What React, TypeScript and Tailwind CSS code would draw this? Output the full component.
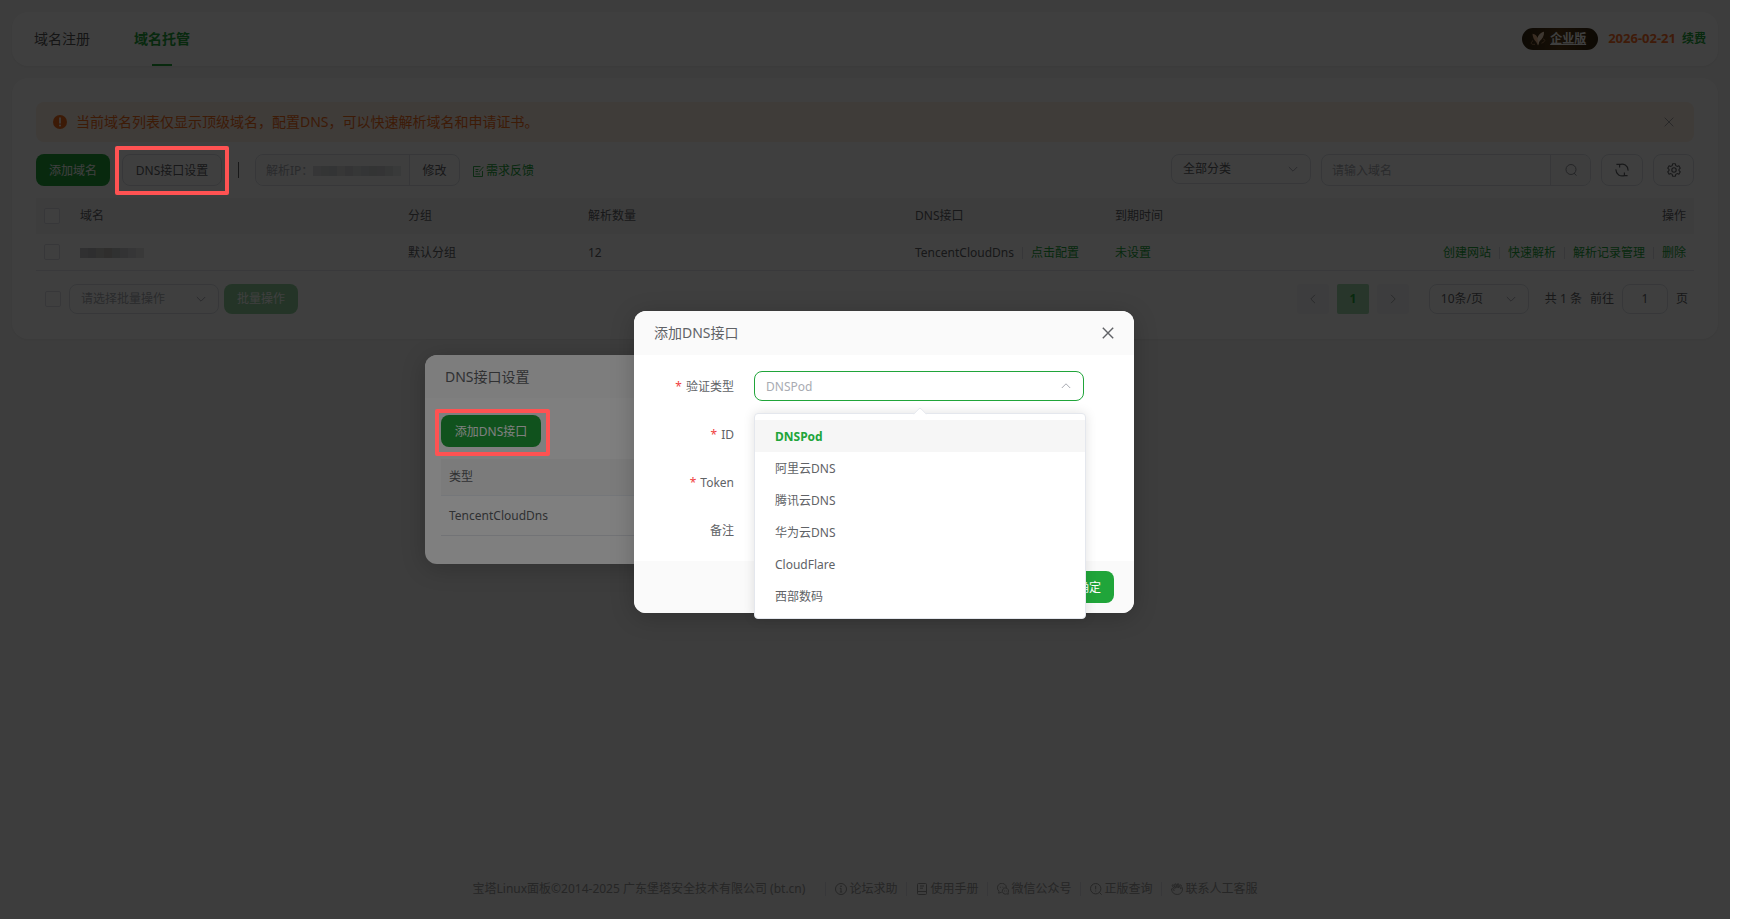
import type { ReactNode } from "react";
import clsx from "clsx";

const footerLinks = [
  { label: "论坛求助", icon: <ForumIcon /> },
  { label: "使用手册", icon: <ManualIcon /> },
  { label: "微信公众号", icon: <WechatIcon /> },
  { label: "正版查询", icon: <GenuineIcon /> },
  { label: "联系人工客服", icon: <ServiceIcon /> },
];

const dnsOptions = ["DNSPod", "阿里云DNS", "腾讯云DNS", "华为云DNS", "CloudFlare", "西部数码"];

const rowActions = ["创建网站", "快速解析", "解析记录管理", "删除"];

export default function App() {
  return (
    <div className="min-h-screen bg-white pr-[10px] font-['Noto_Sans','Noto_Sans_CJK_SC',sans-serif] text-xs text-[#606266]">
      <div className="relative flex min-h-screen flex-col overflow-hidden bg-[#f5f5f5] px-3 pt-3">
        <TopTabs />
        <DomainPanel />
        <Footer />

        <div className="absolute inset-0 z-10 bg-black/50" />
        <DnsListDialog />
        <div className="absolute inset-0 z-30 bg-black/50" />
        <AddDnsDialog />

        {/* guide marks */}
        <div className="absolute top-[146px] left-[115px] z-50 h-[49px] w-[114px] rounded-xs border-4 border-[#ff5252]" />
        <div className="absolute top-[409px] left-1/2 z-50 -ml-[430px] h-[47px] w-[115px] rounded-xs border-4 border-[#ff5252]" />
      </div>
    </div>
  );
}

function TopTabs() {
  return (
    <header className="flex h-[54px] items-center justify-between rounded-2xl bg-white pr-3 shadow-xs">
      <nav className="flex h-full text-sm">
        <a href="#register" className="flex w-[100px] items-center pl-[22px] text-[#555]">域名注册</a>
        <a href="#hosting" className="relative flex w-[100px] items-center justify-center rounded-lg bg-[#fcfcfc] font-bold text-[#20a53a]">
          域名托管
          <span className="absolute bottom-0 left-1/2 h-0.5 w-5 -translate-x-1/2 bg-[#20a53a]" />
        </a>
      </nav>
      <div className="flex items-center font-bold">
        <a href="#edition" className="flex h-[22px] w-[76px] items-center gap-1 rounded-full bg-linear-to-r from-[#332611] via-[#5c3d1a] to-[#332611] pl-2 text-white underline">
          <BirdIcon />
          企业版
        </a>
        <span className="ml-[10px] text-[13px] text-[#fc6d26]">2026-02-21</span>
        <a href="#renew" className="ml-1.5 text-[#20a53a]">续费</a>
      </div>
    </header>
  );
}

function DomainPanel() {
  return (
    <main className="mt-3 rounded-2xl bg-white px-6 pt-6 pb-[25px] shadow-xs">
      <section className="flex h-10 items-center rounded-lg bg-[#fff0e5] px-[17px] text-sm text-[#f56c1a]">
        <svg className="size-[14px]" viewBox="0 0 14 14">
          <circle cx="7" cy="7" r="7" fill="#f06a1a" />
          <path d="M7 3v5" stroke="#fff" strokeWidth="1.6" strokeLinecap="round" />
          <circle cx="7" cy="10.6" r="1" fill="#fff" />
        </svg>
        <p className="ml-[9px]">当前域名列表仅显示顶级域名，配置DNS，可以快速解析域名和申请证书。</p>
        <button className="ml-auto flex size-4 items-center justify-center text-[#909399]" aria-label="关闭提示">
          <CloseIcon className="size-[10px]" />
        </button>
      </section>

      <section className="mt-3 flex h-8 items-center">
        <button className="h-8 w-[74px] rounded-lg bg-[#20a53a] pt-0.5 text-white">添加域名</button>
        <button className="ml-3 h-8 w-[100px] rounded-lg border border-[#dcdfe6] pt-0.5">DNS接口设置</button>
        <span className="ml-4 h-4 w-px bg-[#606266]" />
        <div className="ml-4 flex h-8 w-[205px] rounded-lg border border-[#dcdfe6]">
          <div className="flex flex-1 items-center rounded-l-lg bg-[#f9f9fa] pt-0.5 pl-[10px] text-[#a8abb2]">
            解析IP：
            <Mosaic cells={["bg-[#d8dadc]", "bg-[#d3d4d7]", "bg-[#cfd2d5]", "bg-[#dcdddf]", "bg-[#d0d3d6]", "bg-[#dadcde]", "bg-[#d3d5d8]", "bg-[#ccd0d3]", "bg-[#d0d2d5]", "bg-[#dadcde]", "bg-[#e6e8ea]"]} />
          </div>
          <button className="w-[50px] border-l border-[#dcdfe6] pt-0.5">修改</button>
        </div>
        <a href="#feedback" className="ml-[13px] flex items-center gap-0.5 pt-0.5 text-[#20a53a]">
          <FeedbackIcon />
          需求反馈
        </a>

        <div className="ml-auto flex gap-[10px]">
          <SelectBox label="分类" value="全部分类" className="w-[140px]" />
          <div className="flex h-8 w-[270px] overflow-hidden rounded-lg border border-[#dcdfe6]">
            <input aria-label="搜索域名" placeholder="请输入域名" className="min-w-0 flex-1 px-[10px] pt-0.5 outline-none placeholder:text-[#a8abb2]" />
            <button className="flex w-10 items-center justify-center border-l border-[#dcdfe6] bg-[#f8f8f9] text-[#909399]" aria-label="搜索">
              <svg className="size-3" viewBox="0 0 12 12" fill="none" stroke="currentColor">
                <circle cx="6" cy="5.5" r="5" />
                <path d="M9 9l2.4 2.6" />
              </svg>
            </button>
          </div>
          <button className="flex h-8 w-[42px] items-center justify-center rounded-lg border border-[#dcdfe6]" aria-label="刷新"><RefreshIcon /></button>
          <button className="flex h-8 w-[41px] items-center justify-center rounded-lg border border-[#dcdfe6]" aria-label="设置"><GearIcon /></button>
        </div>
      </section>

      <table className="mt-3 w-full table-fixed text-left">
        <thead>
          <tr className="h-9 bg-[#f7f7f7]">
            <th className="w-9 pl-2"><Checkbox label="全选" /></th>
            <th className="w-[328px] px-2 font-normal">域名</th>
            <th className="w-[180px] px-2 font-normal">分组</th>
            <th className="w-[327px] px-2 font-normal">解析数量</th>
            <th className="w-[200px] px-2 font-normal">DNS接口</th>
            <th className="px-2 font-normal">到期时间</th>
            <th className="w-[20%] px-2 text-right font-normal">操作</th>
          </tr>
        </thead>
        <tbody>
          <tr className="h-9 border-b border-[#e4e7ed]">
            <td className="pl-2"><Checkbox label="选择域名" /></td>
            <td className="px-2 pt-0.5">
              <Mosaic cells={["bg-[#c2c3c5]", "bg-[#b8babd]", "bg-[#c5c5c3]", "bg-[#bcbab5]", "bg-[#c3c4c6]", "bg-[#ccced0]", "bg-[#d8dadc]", "bg-[#e4e5e7]"]} />
            </td>
            <td className="px-2 pt-0.5">默认分组</td>
            <td className="px-2 pt-0.5">12</td>
            <td className="px-2 pt-0.5">
              <div className="flex items-center gap-2 whitespace-nowrap">
                TencentCloudDns
                <Divider />
                <a href="#config" className="text-[#20a53a]">点击配置</a>
              </div>
            </td>
            <td className="px-2 pt-0.5"><a href="#expire" className="text-[#20a53a]">未设置</a></td>
            <td className="px-2 pt-0.5">
              <div className="flex items-center justify-end gap-2 whitespace-nowrap text-[#20a53a]">
                {rowActions.map((action, i) => (
                  <div key={action} className="flex items-center gap-2">
                    {i > 0 && <Divider />}
                    <a href="#action">{action}</a>
                  </div>
                ))}
              </div>
            </td>
          </tr>
        </tbody>
      </table>

      <section className="mt-[13px] flex h-[30px] items-center justify-between pr-1.5 pl-[9px]">
        <div className="flex items-center">
          <Checkbox label="批量选择" />
          <SelectBox label="批量操作" value="请选择批量操作" className="ml-2 w-[150px] text-[#a8abb2]" />
          <button className="ml-[5px] h-[30px] w-[74px] rounded-lg bg-[#90d29d] text-white">批量操作</button>
        </div>
        <div className="flex items-center gap-2">
          <button className="flex h-[30px] w-8 items-center justify-center rounded-xs bg-[#f7f7f8] text-[#a8abb2]" aria-label="上一页"><Chevron className="size-[10px] rotate-90" /></button>
          <button className="h-[30px] w-8 rounded-xs bg-[#a0d8ac] font-bold text-[#20a53a]">1</button>
          <button className="flex h-[30px] w-8 items-center justify-center rounded-xs bg-[#f7f7f8] text-[#a8abb2]" aria-label="下一页"><Chevron className="size-[10px] -rotate-90" /></button>
          <SelectBox label="每页条数" value="10条/页" className="ml-3 w-[100px]" />
          <span className="ml-2">共 1 条</span>
          <label htmlFor="page">前往</label>
          <input id="page" defaultValue="1" className="h-[30px] w-[46px] rounded-lg border border-[#dcdfe6] text-center outline-none" />
          <span>页</span>
        </div>
      </section>
    </main>
  );
}

function DnsListDialog() {
  return (
    <section role="dialog" aria-label="DNS接口设置" className="absolute top-[355px] left-1/2 z-20 -ml-[440px] w-[660px] rounded-xl bg-white shadow-[0_4px_24px_rgba(0,0,0,0.2)]">
      <h2 className="flex h-[43px] items-center rounded-t-xl bg-[#fafafa] pl-5 text-sm">DNS接口设置</h2>
      <div className="px-4 pt-[17px] pb-7">
        <button className="h-8 w-[100px] rounded-lg bg-[#20a53a] pt-0.5 text-white">添加DNS接口</button>
        <table className="mt-3 w-full text-left">
          <thead>
            <tr className="h-9 border-b border-[#ebeef5] bg-[#f7f7f7]">
              <th className="px-2 font-normal">类型</th>
            </tr>
          </thead>
          <tbody>
            <tr className="h-10 border-b border-[#e4e7ed]">
              <td className="px-2 pt-0.5">TencentCloudDns</td>
            </tr>
          </tbody>
        </table>
      </div>
    </section>
  );
}

function AddDnsDialog() {
  return (
    <section role="dialog" aria-label="添加DNS接口" className="absolute top-[311px] left-1/2 z-40 -ml-[231px] w-[500px] rounded-xl bg-white shadow-[0_4px_24px_rgba(0,0,0,0.2)]">
      <div className="flex h-11 items-center justify-between rounded-t-xl bg-[#fafafa] px-5">
        <h2 className="text-sm">添加DNS接口</h2>
        <button aria-label="关闭"><CloseIcon className="size-3" strong /></button>
      </div>
      <form className="flex flex-col gap-4 py-[15px]">
        <FormRow id="type" label="验证类型" required>
          <div className="relative flex h-[30px] w-[330px] items-center">
            <input id="type" readOnly placeholder="DNSPod" className="h-full w-full rounded-lg border border-[#20a53a] px-[11px] outline-none placeholder:text-[#a8abb2]" />
            <Chevron className="absolute right-[13px] size-[10px] rotate-180 text-[#a8abb2]" />
            <OptionPanel />
          </div>
        </FormRow>
        <FormRow id="dns-id" label="ID" required>
          <input id="dns-id" className="h-8 w-[330px] rounded-lg border border-[#dcdfe6] px-[11px]" />
        </FormRow>
        <FormRow id="token" label="Token" required>
          <input id="token" className="h-8 w-[330px] rounded-lg border border-[#dcdfe6] px-[11px]" />
        </FormRow>
        <FormRow id="remark" label="备注">
          <input id="remark" className="h-8 w-[330px] rounded-lg border border-[#dcdfe6] px-[11px]" />
        </FormRow>
      </form>
      <div className="flex h-[52px] items-center justify-end rounded-b-xl bg-[#fafafa] pr-5">
        <button className="h-8 w-[50px] rounded-lg bg-[#20a53a] pt-0.5 text-white">确定</button>
      </div>
    </section>
  );
}

function OptionPanel() {
  return (
    <div className="absolute top-[42px] left-0 z-10 w-[332px] rounded-sm border border-[#e4e7ed] bg-white py-1.5 shadow-[0_0_12px_rgba(0,0,0,0.12)]">
      <span className="absolute -top-[5px] left-1/2 size-[10px] -translate-x-1/2 rotate-45 rounded-tl-xs border-t border-l border-[#e4e7ed] bg-white" />
      <ul role="listbox" className="relative">
        {dnsOptions.map((name, i) => (
          <li
            key={name}
            role="option"
            aria-selected={i === 0}
            className={clsx("flex h-8 items-center px-5 pt-0.5", i === 0 && "bg-[#f6f6f6] font-bold text-[#20a53a]")}
          >
            {name}
          </li>
        ))}
      </ul>
    </div>
  );
}

function FormRow({ id, label, required, children }: FormRowProps) {
  return (
    <div className="flex h-8 items-center">
      <label htmlFor={id} className="w-[100px] pt-0.5 text-right">
        {required && <span className="mr-1 text-[#f04040]">*</span>}
        {label}
      </label>
      <div className="ml-5">{children}</div>
    </div>
  );
}

function SelectBox({ label, value, className }: SelectBoxProps) {
  return (
    <div className={clsx("relative flex h-[30px] items-center", className)}>
      <select aria-label={label} className="h-full w-full appearance-none rounded-lg border border-[#dcdfe6] bg-white px-[11px] outline-none">
        <option>{value}</option>
      </select>
      <Chevron className="pointer-events-none absolute right-[13px] size-[10px] text-[#a8abb2]" />
    </div>
  );
}

function Checkbox({ label }: { label: string }) {
  return (
    <input type="checkbox" aria-label={label} className="block size-4 appearance-none rounded-xs border border-[#dcdfe6] bg-white" />
  );
}

function Divider() {
  return <span className="h-3 w-px bg-[#dcdfe6]" />;
}

// masked value
function Mosaic({ cells }: { cells: string[] }) {
  return (
    <span className="flex">
      {cells.map((cell, i) => (
        <span key={i} className={clsx("h-[10px] w-2", cell)} />
      ))}
    </span>
  );
}

function Footer() {
  return (
    <footer className="mt-auto flex items-center justify-center pb-[22px] text-[#999]">
      <span className="mr-5">宝塔Linux面板©2014-2025 广东堡塔安全技术有限公司 (bt.cn)</span>
      {footerLinks.map(({ label, icon }, i) => (
        <div key={label} className="flex items-center">
          <span className={clsx("mr-[9px] h-[14px] w-px bg-[#dcdfe6]", i > 0 && "ml-[9px]")} />
          <a href="#help" className="flex items-center gap-0.5">
            {icon}
            {label}
          </a>
        </div>
      ))}
    </footer>
  );
}

function Chevron({ className }: { className?: string }) {
  return (
    <svg className={className} viewBox="0 0 10 10" fill="none" stroke="currentColor">
      <path d="M.8 3 5 7.2 9.2 3" />
    </svg>
  );
}

function CloseIcon({ className, strong }: { className?: string; strong?: boolean }) {
  return (
    <svg className={className} viewBox="0 0 12 12" fill="none" stroke="currentColor" strokeWidth={strong ? 1.4 : 1}>
      <path d="M.8.8l10.4 10.4M11.2.8.8 11.2" />
    </svg>
  );
}

function RefreshIcon() {
  return (
    <svg className="size-[14px]" viewBox="0 0 14 14" fill="none" stroke="currentColor" strokeWidth="1.2">
      <path d="M4.2 1.8A6 6 0 0 1 13 7.6M9.8 12.2A6 6 0 0 1 1 6.4" />
      <path d="M4.6 4.6V1.4H1.4M9.4 9.4v3.2h3.2" />
    </svg>
  );
}

function GearIcon() {
  return (
    <svg className="size-[14px]" viewBox="0 0 14 14" fill="none" stroke="currentColor" strokeWidth="1.1" strokeLinejoin="round">
      <path d="M5.6.8h2.8l.4 1.8 1.3.8 1.8-.6 1.4 2.4L12 6.4v1.2l1.3 1.2-1.4 2.4-1.8-.6-1.3.8-.4 1.8H5.6l-.4-1.8-1.3-.8-1.8.6L.7 8.8 2 7.6V6.4L.7 5.2l1.4-2.4 1.8.6 1.3-.8z" />
      <circle cx="7" cy="7" r="2.2" />
    </svg>
  );
}

function FeedbackIcon() {
  return (
    <svg className="size-[11px]" viewBox="0 0 11 11" fill="none" stroke="currentColor" strokeWidth=".9">
      <path d="M7.5.5h-7v10h9V5M2.5 3.5h3M2.5 5.5H5M2.5 8H7M10.5.8 6 5.8" />
    </svg>
  );
}

function BirdIcon() {
  return (
    <svg className="size-4" viewBox="0 0 16 16">
      <path d="M2.5 2.8c2.6.2 4.3 1.8 5 4.2C8.6 3.8 11 1.6 14 .8c.3 3.6-1.2 7.2-4.6 9.4L8 14.5 6.2 11C3.8 9 2.6 6 2.5 2.8z" fill="#e8b58a" />
      <path d="M7.5 7 8 14.5l1.4-4.3C12 8 13.8 4.8 14 .8 10.8 1.8 8.6 3.8 7.5 7z" fill="#f7dfc4" />
      <path d="M3 9.5c-3 2.5-2 4.5 2 3.800M13 8c3 .5 2.200 2.800-1.500 4.200" fill="none" stroke="#b98a5e" strokeWidth=".8" />
    </svg>
  );
}

function ForumIcon() {
  return (
    <svg className="size-3" viewBox="0 0 12 12" fill="none" stroke="currentColor">
      <circle cx="6" cy="6" r="5.5" />
      <path d="M6 5.2V9M4.8 5.3H6M4.8 9h2.4" />
      <circle cx="6" cy="3.2" r=".4" fill="currentColor" />
    </svg>
  );
}

function ManualIcon() {
  return (
    <svg className="size-3" viewBox="0 0 12 12" fill="none" stroke="currentColor">
      <rect x="1.5" y=".5" width="9" height="11" rx="1" />
      <path d="M1.5 8.5h9M4 3h4M4 5.2h3" />
    </svg>
  );
}

function WechatIcon() {
  return (
    <svg className="size-3" viewBox="0 0 12 12" fill="none" stroke="currentColor" strokeWidth=".9">
      <path d="M4.8 9.2 1.6 10.200l.4-2A4.500 4.500 0 1 1 9.400 4.800" />
      <path d="M11.3 11.2 9.800 10.800A3.100 3.100 0 1 1 11.200 9.400z" />
      <path d="M3.4 3.8v.9M6 3.8v.9M7.500 7.600v.8M9.300 7.600v.8" />
    </svg>
  );
}

function GenuineIcon() {
  return (
    <svg className="size-3" viewBox="0 0 12 12" fill="none" stroke="currentColor">
      <circle cx="5.7" cy="5.7" r="5.2" />
      <path d="M5.7 2.8v3.6M5.7 7.6v.9M9.4 9.4l2.2 2.2" />
    </svg>
  );
}

function ServiceIcon() {
  return (
    <svg className="size-3" viewBox="0 0 12 12" fill="none" stroke="currentColor" strokeWidth=".9">
      <path d="M3.600 6.200 1 2.400l1.200-.8 2.300 3.600L3.600 1.200 5 .8l1 4L6.500.8l1.400.2-.3 4L9.200 1.800l1.200.6-1 3.400 1.900-1.200.3 1.200C11.400 9.400 9.200 11.500 6.200 11.500S.8 9.500.4 6l1-.6 2 2.600" />
    </svg>
  );
}

interface FormRowProps {
  id: string;
  label: string;
  required?: boolean;
  children: ReactNode;
}

interface SelectBoxProps {
  label: string;
  value: string;
  className?: string;
}
